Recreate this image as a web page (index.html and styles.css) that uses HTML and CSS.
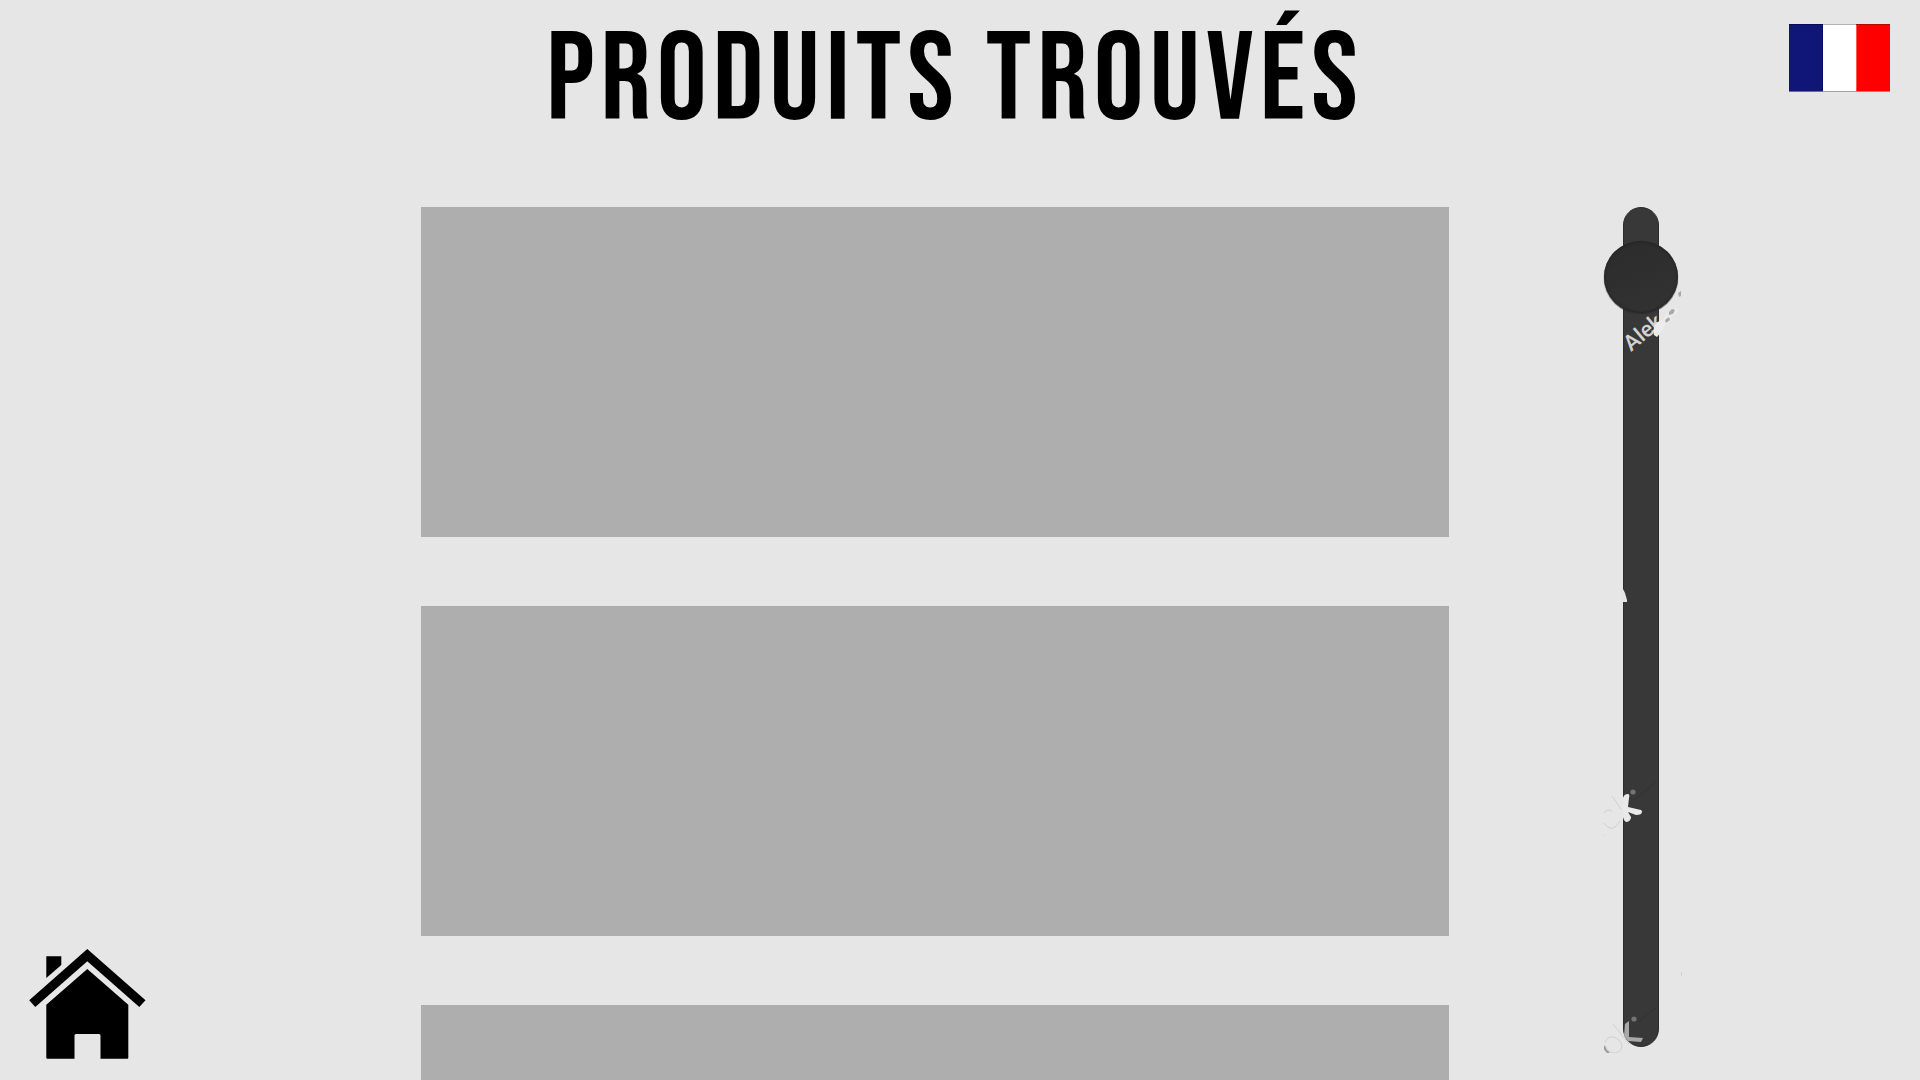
FILE: index.html
```html
<!DOCTYPE html>
<html lang="fr">
<head>
<meta charset="utf-8">
<meta name="viewport" content="width=device-width, initial-scale=1">
<title>Produits trouvés</title>
<link rel="stylesheet" href="styles.css">
</head>
<body>
<header class="header">
  <h1 class="title">PRODUITS TROUVÉS</h1>
  <button class="language" type="button" aria-label="Français">
    <svg class="flag" viewBox="0 0 101 68" aria-hidden="true">
      <rect width="34" height="68" fill="#101678"/>
      <rect x="34" width="33" height="68" fill="#fff"/>
      <rect x="67" width="34" height="68" fill="#f00"/>
      <path d="M33.5 0V68" stroke="#080c62"/>
      <path d="M67.5 0V68" stroke="#f55"/>
      <path d="M0 .5H34" stroke="#0a0e50"/>
      <path d="M34 .5H67" stroke="#b4b4b4"/>
      <path d="M67 .5H101" stroke="#b40808"/>
      <path d="M0 67.5H34" stroke="#686a9c"/>
      <path d="M34 67.5H67" stroke="#a4a4a4"/>
      <path d="M67 67.5H101" stroke="#e66"/>
    </svg>
  </button>
</header>
<main class="content">
  <nav class="side">
    <a class="home" href="#" aria-label="Accueil">
      <svg class="home-icon" viewBox="0 0 117 110" aria-hidden="true">
        <path d="M58.3 0L116.5 51.3L110.3 58L58.3 12.3L6.3 58L.2 51.3Z"/>
        <path d="M17.3 7.3H32.3V16L17.3 29Z"/>
        <path d="M58.3 20L99.3 55.7V108.7Q99.3 109.7 98.3 109.7H71.5V86.5Q71.5 85 70 85H47Q45.5 85 45.5 86.5V109.7H18.3Q17.3 109.7 17.3 108.7V55.7Z"/>
      </svg>
    </a>
  </nav>
  <ul class="products">
    <li class="product"></li>
    <li class="product"></li>
    <li class="product"></li>
  </ul>
  <div class="scroller">
    <input class="slider" type="range" min="0" max="768" value="33" aria-label="Faire défiler les produits">
    <svg class="marks" viewBox="0 0 78 846" aria-hidden="true">
      <text class="mark-text" transform="translate(27 145) rotate(-40)">Alek</text>
      <path d="M51 118l4-4 4-1 3-5 6-2 3-5 4 1-3 5-5 3-1 5-5 3-2 5-6 7-3-2-1-4z" fill="#ececec"/>
      <path d="M65 105l3-3 3 1-2 4-4 1zM61 113l4-3 1 3-4 3zM74 86l3-2v5l-2 1z" fill="#a8a8a8"/>
      <path d="M19 382l2 4 2 7v2h-4z" fill="#e4e4e4"/>
      <circle cx="29" cy="585" r="2.6" fill="#737373"/>
      <path d="M19 591q1-4 5-4 2 0 1 4l-1 9 13 3q2 1 0 4-2 1-5 1l-8-3 3 5q0 4-4 5-3 0-4-5z" fill="#e9e9e9"/>
      <path d="M8 589l9 13M0 606q4-5 8-2M0 616q8 12 16-2M0 627v2" fill="none" stroke="#d0d0d0"/>
      <path d="M29 594l24-20M34 815l19-15" stroke="#323232"/>
      <circle cx="30" cy="812" r="2.6" fill="#737373"/>
      <path d="M21 817l4-3v16l14 1-2 4-13-1-4-5z" fill="#a8a8a8"/>
      <path d="M9 817l16 20M1 835q3-6 8-5 8 2 9 9-1 7-8 7-6 0-9-8" fill="none" stroke="#d0d0d0"/>
      <path d="M0 839q1 5 5 7" fill="none" stroke="#999" stroke-width="2"/>
      <path d="M77.500 765v4" stroke="#d2d2d2"/>
    </svg>
  </div>
</main>
</body>
</html>
```
FILE: styles.css
```css
* {
  box-sizing: border-box;
}

body {
  margin: 0;
  height: 100vh;
  display: flex;
  flex-direction: column;
  overflow: hidden;
  background: #e6e6e6;
  color: #000;
  font-family: "Bebas Neue", "Liberation Sans Narrow", "Liberation Sans", sans-serif;
}

.header {
  flex: none;
  display: grid;
  grid-template-columns: 1fr auto 1fr;
  align-items: start;
  min-height: 207px;
  padding: 0 30px 0 20px;
}

.title {
  grid-column: 2;
  margin: 0;
  padding-top: 18px;
  font-size: 125px;
  line-height: 128px;
  font-weight: 400;
  letter-spacing: 6px;
  white-space: nowrap;
}

.language {
  justify-self: end;
  margin: 24px 0 0;
  padding: 0;
  border: 0;
  background: none;
  cursor: pointer;
}

.flag {
  display: block;
  width: 101px;
  height: 68px;
}

.content {
  flex: 1;
  min-height: 0;
  display: grid;
  grid-template-columns: 421fr 1028fr 155fr 78px 238fr;
  grid-template-rows: minmax(0, 1fr);
}

.side {
  align-self: end;
  padding: 0 0 21px 29px;
}

.home {
  display: inline-block;
  vertical-align: top;
}

.home-icon {
  display: block;
  width: 117px;
  height: 110px;
}

.products {
  display: flex;
  flex-direction: column;
  gap: 69px;
  margin: 0;
  padding: 0;
  list-style: none;
  overflow: hidden;
}

.product {
  flex: none;
  height: 330px;
  background: #aeaeae;
}

.scroller {
  grid-column: 4;
  position: relative;
  padding-bottom: 33px;
}

.slider {
  appearance: none;
  writing-mode: vertical-lr;
  display: block;
  width: 74px;
  height: 100%;
  margin: 0;
  background: none;
  cursor: pointer;
}

.slider::-webkit-slider-runnable-track {
  width: 36px;
  border: 1px solid #2c2c2c;
  border-radius: 18px;
  background: #383838;
}

.slider::-webkit-slider-thumb {
  appearance: none;
  width: 74px;
  height: 72px;
  margin-left: -20px;
  border-radius: 50%;
  background: linear-gradient(160deg, #2b2b2b, #333);
  box-shadow: inset 0 0 2px 1px #242424, 0 1px 1px #2a2a2a;
}

.marks {
  position: absolute;
  top: 0;
  left: 0;
  width: 78px;
  height: 846px;
  pointer-events: none;
}

.mark-text {
  fill: #d2d2d2;
  font-family: Roboto, sans-serif;
  font-size: 22px;
  font-weight: 500;
}
```
